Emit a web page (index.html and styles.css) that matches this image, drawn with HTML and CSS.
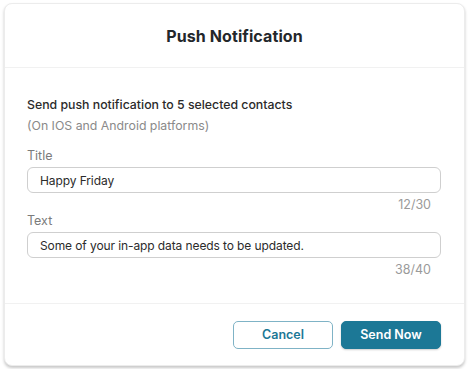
FILE: index.html
```html
<!DOCTYPE html>
<html lang="en">
  <head>
    <meta charset="UTF-8" />
    <title>Push Notification</title>
    <link rel="stylesheet" href="styles.css">
  </head>
  <body>
    <div class="modal">
      <header class="modal-header">
        <h1>Push Notification</h1>
      </header>
      <section class="modal-body">
        <p class="lead">Send push notification to 5 selected contacts</p>
        <p class="sub">(On IOS and Android platforms)</p>
        <label class="field">
          <span class="label">Title</span>
          <input type="text" value="Happy Friday" />
          <span class="count">12/30</span>
        </label>
        <label class="field">
          <span class="label">Text</span>
          <input type="text" value="Some of your in-app data needs to be updated." />
          <span class="count">38/40</span>
        </label>
      </section>
      <footer class="modal-footer">
        <button class="btn btn-outline">Cancel</button>
        <button class="btn btn-primary">Send Now</button>
      </footer>
    </div>
  </body>
</html>
```

FILE: styles.css
```css
* {
  box-sizing: border-box;
}
body {
  margin: 0;
  padding: 3px 4px;
  background: #ffffff;
  font-family: Inter, "Noto Sans", sans-serif;
  color: #2b2b2b;
}
.modal {
  width: 461px;
  height: 363px;
  background: #ffffff;
  border: 1px solid #ececec;
  border-radius: 8px;
  box-shadow: 0 2px 3px rgba(0, 0, 0, 0.22);
  display: flex;
  flex-direction: column;
}
.modal-header {
  height: 64px;
  border-bottom: 1px solid #f1f1f1;
  display: flex;
  align-items: center;
  justify-content: center;
}
.modal-header h1 {
  margin: 0;
  font-size: 16px;
  font-weight: 700;
  color: #23272b;
  letter-spacing: 0.1px;
}
.modal-body {
  flex: 1;
  padding: 29px 23px 0 22px;
  border-bottom: 1px solid #f1f1f1;
}
.lead {
  margin: 0;
  font-size: 12.3px;
  font-weight: 500;
  color: #2b2b2b;
  line-height: 16px;
}
.sub {
  margin: 5px 0 0;
  font-size: 12.3px;
  color: #8a8a8a;
  line-height: 16px;
}
.field {
  display: flex;
  flex-direction: column;
}
.field:first-of-type {
  margin-top: 14px;
}
.label {
  font-size: 12.5px;
  color: #7b7b7b;
  line-height: 16px;
  margin-bottom: 3px;
}
.field input {
  width: 414px;
  height: 26px;
  border: 1px solid #cfcfcf;
  border-radius: 6px;
  padding: 0 12px;
  font-family: inherit;
  font-size: 12px;
  letter-spacing: -0.1px;
  color: #2b2b2b;
  outline: none;
}
.count {
  align-self: flex-end;
  margin-right: 10px;
  font-size: 12.5px;
  color: #9a9a9a;
  line-height: 16px;
  margin-top: 4px;
}
.modal-footer {
  height: 61px;
  display: flex;
  justify-content: flex-end;
  align-items: center;
  gap: 8px;
  padding-right: 23px;
}
.btn {
  width: 100px;
  height: 28px;
  border-radius: 5px;
  font-family: Inter, "Liberation Sans", sans-serif;
  font-size: 12.5px;
  font-weight: 600;
  cursor: pointer;
}
.btn-outline {
  background: #ffffff;
  border: 1.5px solid #7fb3c6;
  color: #1c7896;
}
.btn-primary {
  background: #1c7896;
  border: 1px solid #1c7896;
  color: #ffffff;
  box-shadow: 0 1px 2px rgba(0, 0, 0, 0.2);
}
```
